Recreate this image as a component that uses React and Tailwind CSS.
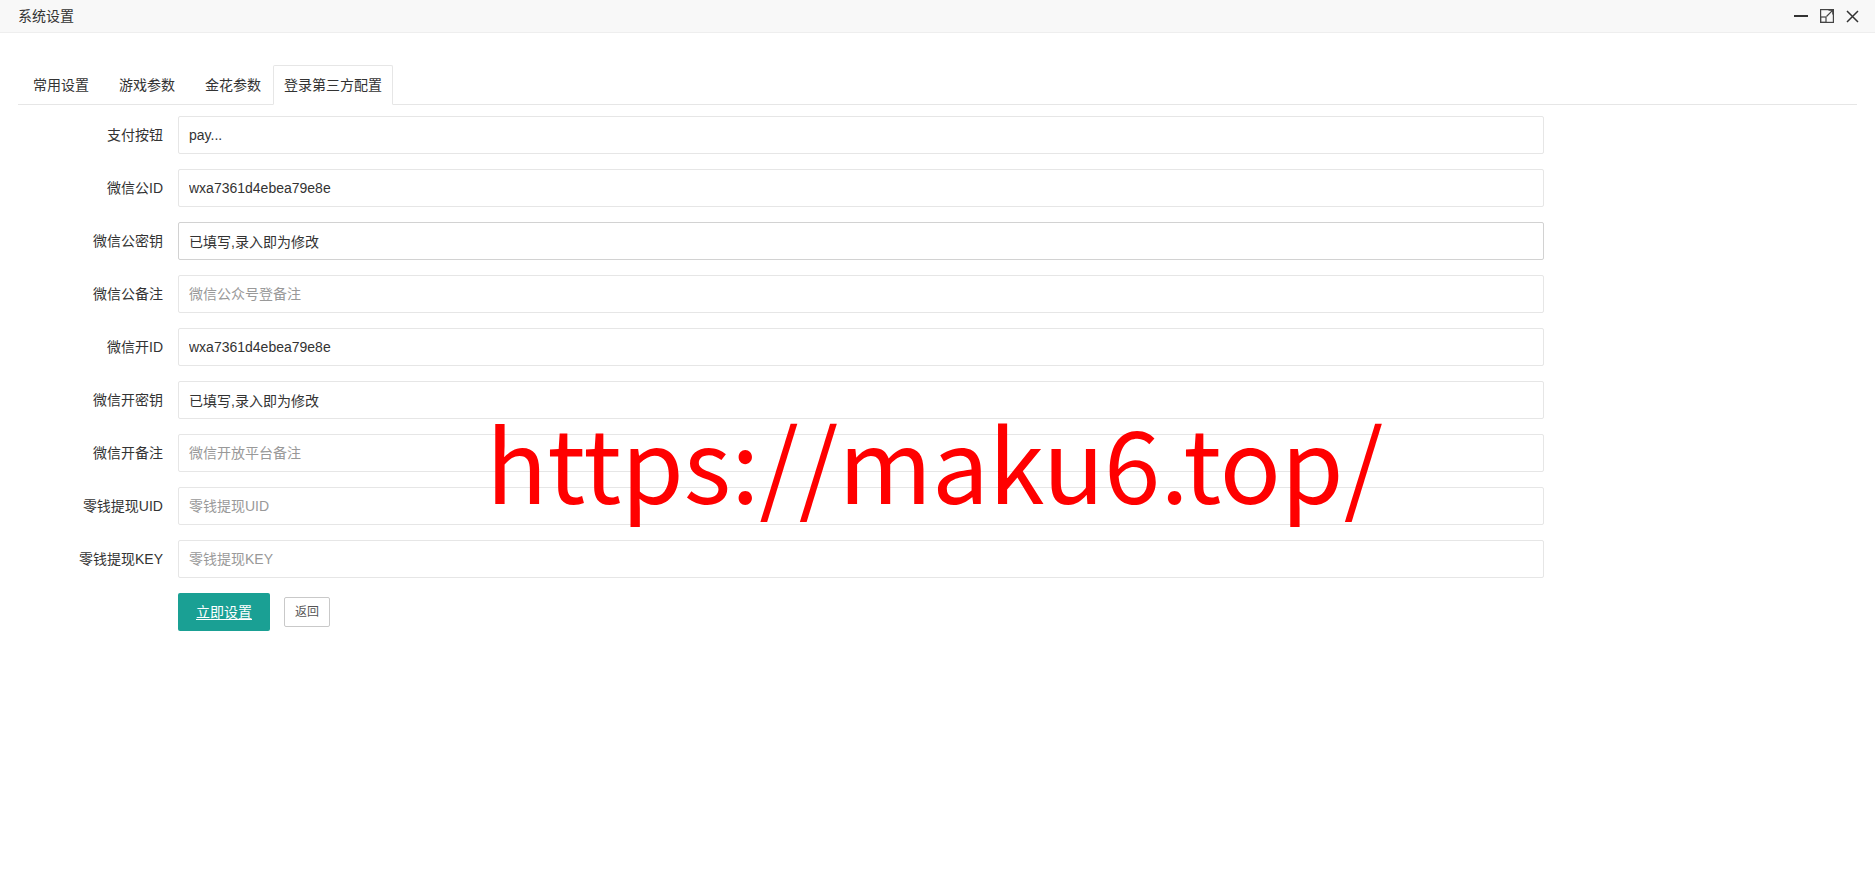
import { useState } from 'react';

const tabs = ['常用设置', '游戏参数', '金花参数', '登录第三方配置'];

const fields = [
  { label: '支付按钮', value: 'pay...' },
  { label: '微信公ID', value: 'wxa7361d4ebea79e8e' },
  { label: '微信公密钥', value: '已填写,录入即为修改', hover: true },
  { label: '微信公备注', placeholder: '微信公众号登备注' },
  { label: '微信开ID', value: 'wxa7361d4ebea79e8e' },
  { label: '微信开密钥', value: '已填写,录入即为修改' },
  { label: '微信开备注', placeholder: '微信开放平台备注' },
  { label: '零钱提现UID', placeholder: '零钱提现UID' },
  { label: '零钱提现KEY', placeholder: '零钱提现KEY' },
];

export default function App() {
  const [active, setActive] = useState(3);
  const [values, setValues] = useState(fields.map((f) => f.value || ''));

  return (
    <div
      className="relative min-h-screen w-full bg-white text-[#333]"
      style={{ fontFamily: '"Liberation Sans", "Noto Sans CJK SC", sans-serif' }}
    >
      {/* 标题栏 */}
      <div className="flex h-[33px] items-center justify-between border-b border-[#eee] bg-[#f8f8f8] pl-[18px] pr-[16px]">
        <span className="text-[14px] text-[#333]">系统设置</span>
        <div className="flex items-center gap-[12px] text-[#333]">
          <svg width="14" height="14" viewBox="0 0 14 14">
            <rect x="0" y="6" width="14" height="2" fill="#333" />
          </svg>
          <svg width="14" height="14" viewBox="0 0 14 14" fill="none" stroke="#444" strokeWidth="1.2">
            <rect x="0.6" y="0.6" width="12.8" height="12.8" />
            <rect x="0.6" y="8" width="5.4" height="5.4" />
            <path d="M6.5 7.5 L12.8 1.2 M8.5 1.2 H12.8 V5.5" />
          </svg>
          <svg width="13" height="13" viewBox="0 0 13 13" fill="none" stroke="#333" strokeWidth="1.5">
            <path d="M1 1 L12 12 M12 1 L1 12" />
          </svg>
        </div>
      </div>

      {/* 选项卡 */}
      <div className="px-[18px] pt-[32px]">
        <ul className="flex h-[40px] border-b border-[#e6e6e6]">
          {tabs.map((t, i) => (
            <li
              key={t}
              onClick={() => setActive(i)}
              className={
                i === active
                  ? '-mb-px ml-[-3px] cursor-pointer rounded-t-[2px] border border-b-white border-[#e6e6e6] bg-white px-[10px] text-[14px] leading-[39px] text-[#333]'
                  : 'cursor-pointer px-[15px] text-[14px] leading-[40px] text-[#333]'
              }
            >
              {t}
            </li>
          ))}
        </ul>

        {/* 表单 */}
        <div className="pt-[11px]">
          {fields.map((f, i) => (
            <div key={f.label} className="mb-[15px] flex h-[38px] items-center">
              <label className="w-[160px] shrink-0 pr-[15px] text-right text-[14px] text-[#333]">
                {f.label}
              </label>
              <input
                type="text"
                value={values[i]}
                placeholder={f.placeholder}
                onChange={(e) => {
                  const v = [...values];
                  v[i] = e.target.value;
                  setValues(v);
                }}
                className={
                  'h-[38px] w-[1366px] rounded-[2px] border bg-white pl-[10px] text-[14px] text-[#333] outline-none placeholder:text-[#999] ' +
                  (f.hover ? 'border-[#d2d2d2]' : 'border-[#e6e6e6]')
                }
              />
            </div>
          ))}
          <div className="flex items-center pl-[160px]">
            <button
              type="button"
              className="h-[38px] w-[92px] rounded-[2px] bg-[#1aa094] text-[14px] text-white underline underline-offset-2"
            >
              立即设置
            </button>
            <button
              type="button"
              className="ml-[14px] h-[30px] rounded-[2px] border border-[#c9c9c9] bg-white px-[10px] text-[12px] text-[#555]"
            >
              返回
            </button>
          </div>
        </div>
      </div>

      {/* 水印 */}
      <div
        className="pointer-events-none absolute left-[486px] top-[410px] text-[101px] leading-none text-[#ff0000]"
        style={{ fontFamily: '"Noto Sans CJK SC", sans-serif' }}
      >
        https://maku6.top/
      </div>
    </div>
  );
}
